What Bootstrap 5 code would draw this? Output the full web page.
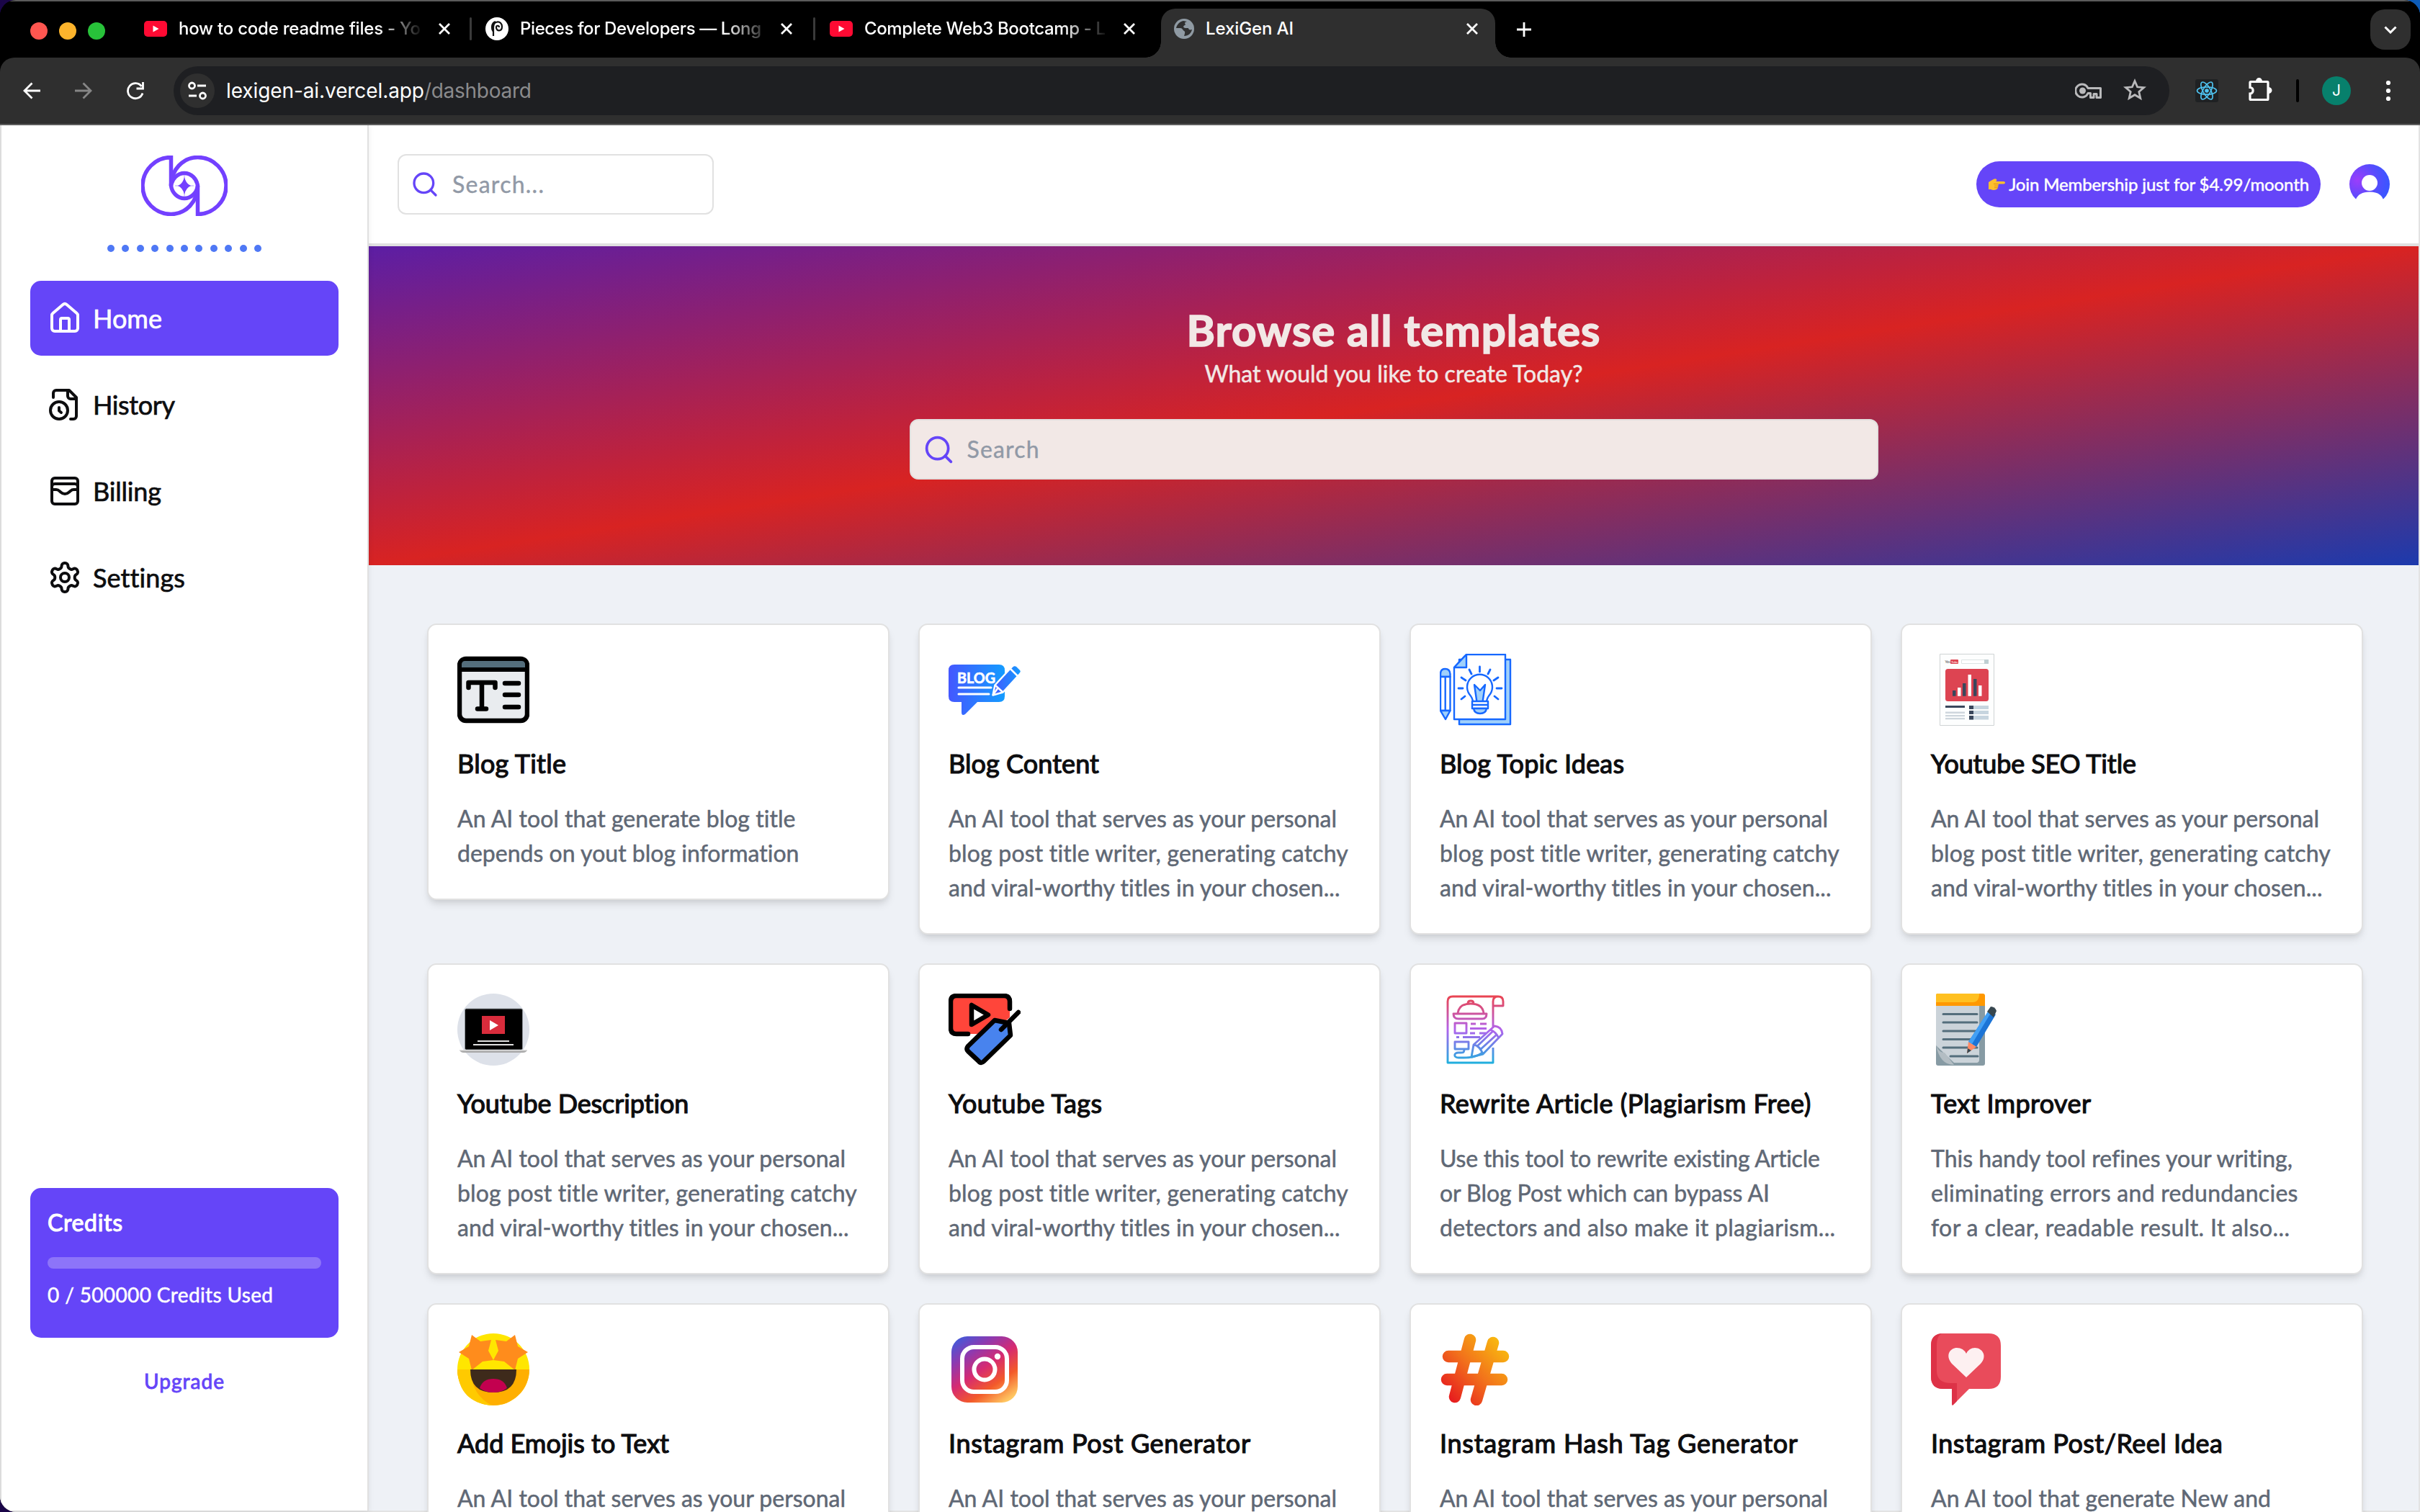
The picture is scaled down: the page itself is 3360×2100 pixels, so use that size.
<!DOCTYPE html>
<html lang="en">
<head>
<meta charset="utf-8">
<meta name="viewport" content="width=device-width, initial-scale=1">
<title>LexiGen AI</title>
<link href="https://cdn.jsdelivr.net/npm/bootstrap@5.3.0/dist/css/bootstrap.min.css" rel="stylesheet">
<style>
:root{--brand:#6545f8;--ui:Lato,"Open Sans",sans-serif;--chrome:Inter,Roboto,sans-serif}
html,body{height:2100px;overflow:hidden}
body{background:linear-gradient(90deg,#1a0548,#0d5cb8);font-family:var(--ui);color:#0d0d0f}
svg{display:block;flex:none}
.fit{display:inline-block;white-space:nowrap}
.win{width:3360px;height:2100px;border-radius:22px 22px 0 22px;overflow:hidden;background:#000}
/* browser chrome */
.tabstrip{height:80px;border-top:2px solid #5b5b5b;background:#000;color:#fff;font:500 24px/1 var(--chrome);padding:0 13px 0 42px}
.light{width:24px;height:24px;border-radius:50%;margin-right:16px;margin-top:3px}
.tab{height:78px;display:flex;flex:none;align-items:center;padding-bottom:2px}
.tab .ttl{margin-left:16px;flex:1;overflow:hidden;line-height:32px}
.fade-r{-webkit-mask-image:linear-gradient(90deg,#000 82%,transparent 101%)}
.tsep{width:3px;height:32px;background:#3a3a3a;border-radius:2px}
.tab.on{position:relative;background:#2f2f2f;height:68px;align-self:flex-end;border-radius:20px 20px 0 0;padding-bottom:12px}
.tab.on::before,.tab.on::after{content:"";position:absolute;bottom:0;width:22px;height:22px}
.tab.on::before{left:-22px;background:radial-gradient(circle at 0 0,#0000 21.5px,#2f2f2f 22px)}
.tab.on::after{right:-22px;background:radial-gradient(circle at 100% 0,#0000 21.5px,#2f2f2f 22px)}
.dd{width:56px;height:56px;border-radius:20px;background:#2f2f2f}
.toolbar{height:94px;background:#2f2f2f;border-bottom:2px solid #5f5f5f;border-radius:20px 20px 0 0}
.omni{width:2771px;height:68px;border-radius:34px;background:#1e1f22;padding:0 32px 0 9px;font:400 28px/1 var(--chrome)}
.tune{width:48px;height:48px;border-radius:50%;background:#2f2f2f}
.me{width:40px;height:40px;border-radius:50%;background:#07806c;color:#fff;font:400 21px/40px var(--chrome);text-align:center}
/* page */
.page{height:1926px;border:2px solid #e3e3e3;border-top:0;background:#fff}
.side{width:510px;border-right:2px solid #e0e0e0;padding:42px 40px 0;box-shadow:0 2px 8px rgba(0,0,0,.08);z-index:2;position:relative}
.dots{gap:10.4px;margin:40px 0 40px}
.dots i{width:10px;height:10px;border-radius:50%;background:#4f78f5}
.navi{height:104px;border-radius:15px;padding:0 24px;font-size:36px;gap:15px;color:#0d0d0f;text-decoration:none;-webkit-text-stroke:.7px}
.navi.on{background:var(--brand);color:#fff}
.credits{height:208px;border-radius:15px;background:var(--brand);color:#fff;padding:24px}
.credits h2{font-size:32px;line-height:48px;margin:0 0 24px;font-weight:400;-webkit-text-stroke:1.1px}
.bar{height:16px;border-radius:8px;background:#8d74f9}
.credits p{font-size:28px;line-height:40px;margin:16px 0 0;-webkit-text-stroke:.5px}
.upg{color:var(--brand);font-size:28px;line-height:40px;margin:40px 0 160px;-webkit-text-stroke:.9px}
.topbar{height:168px;border-bottom:4px solid #e0e0e0;padding:0 40px 0 40px}
.find{border:2px solid #e1e1e1;border-radius:12px;height:84px;font-size:32px;color:#9199a6;-webkit-text-stroke:.4px}
.pill{height:64px;border-radius:32px;background:var(--brand);color:#fff;font-size:24px;padding:0 16px;gap:5px;-webkit-text-stroke:.5px}
.hero{height:443px;background:linear-gradient(to bottom right,#5c1ea4,#d82322,#1c3aad);padding-top:76px;color:#f2e8e6}
.hero h1{font-size:60px;line-height:80px;margin:0;font-weight:700;-webkit-text-stroke:1.6px}
.hero p{font-size:32px;line-height:48px;margin:-3px 0 39px;-webkit-text-stroke:.5px}
.hero .find{width:1345px;background:#f2e8e6;border-color:#e3dfde}
.main{background:#eef1f6}
.tools{display:grid;grid-template-columns:repeat(4,642px);gap:40px;padding:81px 0 0 81px;align-items:start}
.tool{border:2px solid #e1e1e1;border-radius:13px;background:#fff;padding:40px;box-shadow:0 8px 12px -2px rgba(0,0,0,.1),0 4px 8px -4px rgba(0,0,0,.1)}
.tool h3{font-size:36px;line-height:56px;margin:24px 0 25px;font-weight:400;white-space:nowrap;-webkit-text-stroke:1.2px}
.tool p{font-size:32px;line-height:48px;margin:0 0 -1px;color:#5f6875;-webkit-text-stroke:.5px}
.tool p .fit{display:block;width:max-content}
</style>
</head>
<body>
<svg width="0" height="0" class="position-absolute">
<defs>
<symbol id="yt" viewBox="0 0 32 22"><rect width="32" height="22" rx="5" fill="#ff0a33"/><path d="M12.500 6.500v9l8-4.500z" fill="#fff"/></symbol>
<symbol id="x" viewBox="0 0 16 16"><path d="M1 1l14 14M15 1L1 15" stroke="#fff" stroke-width="2.800"/></symbol>
<symbol id="mag" viewBox="0 0 24 24"><g fill="none" stroke="#6545f8" stroke-width="2" stroke-linecap="round"><circle cx="11" cy="11" r="8"/><path d="m21 21-4.300-4.300"/></g></symbol>
</defs>
</svg>
<div class="win">
  <header>
    <div class="tabstrip d-flex align-items-center">
      <span class="light" style="background:#ff5650"></span><span class="light" style="background:#fdb42c"></span><span class="light" style="background:#28c23a"></span>
      <div class="tab" style="width:493px;padding-left:38px"><svg width="32" height="22"><use href="#yt"/></svg><div class="ttl fade-r"><span class="fit" data-w="335">how to code readme files - Yo</span></div><svg class="ms-4" width="16" height="16"><use href="#x"/></svg><span class="tsep" style="margin-left:27px"></span></div>
      <div class="tab" style="width:477px;padding-left:19px"><svg width="32" height="32" viewBox="0 0 32 32"><circle cx="16" cy="16" r="16" fill="#fff"/><path d="M11 26V14c0-10 12-10 12-1 0 7-8 7-8 1 0-3 4-3 4 0M11 20c-3-4-3-12 3-14" fill="none" stroke="#111" stroke-width="2.200"/></svg><div class="ttl fade-r"><span class="fit" data-w="334">Pieces for Developers — Long</span></div><svg class="ms-3" width="16" height="16"><use href="#x"/></svg><span class="tsep" style="margin-left:29px"></span></div>
      <div class="tab" style="width:480px;padding-left:20px"><svg width="32" height="22"><use href="#yt"/></svg><div class="ttl fade-r"><span class="fit" data-w="334">Complete Web3 Bootcamp - L</span></div><svg class="ms-4" width="16" height="16" style="margin-right:36px"><use href="#x"/></svg></div>
      <div class="tab on" style="width:464px;padding-left:18px;padding-right:24px"><svg width="28" height="28" viewBox="0 0 28 28"><circle cx="14" cy="14" r="14" fill="#8f9aa3"/><path d="M13 3c-5 1-9 5-10 10h6c3 0 3 3 5 4 2 1 1 4 0 7 6 0 10-4 11-9-3 1-5 0-5-2h-4c-3 0-4-3-1-4 2-1 0-2 0-3s2-2 3-2z" fill="#2f2f2f"/></svg><div class="ttl"><span class="fit" data-w="121">LexiGen AI</span></div><svg width="16" height="16"><use href="#x"/></svg></div>
      <svg width="20" height="20" viewBox="0 0 20 20" style="margin-left:30px"><path d="M10 0v20M0 10h20" stroke="#fff" stroke-width="2.800"/></svg>
      <div class="dd ms-auto d-flex align-items-center justify-content-center"><svg width="18" height="11" viewBox="0 0 18 11"><path d="M1.500 1.500L9 9l7.500-7.500" fill="none" stroke="#fff" stroke-width="3"/></svg></div>
    </div>
    <div class="toolbar d-flex align-items-center">
      <svg width="24" height="24" viewBox="0 0 24 24" style="margin-left:32px"><path d="M24 12H2M12.500 1.500L2 12l10.500 10.500" fill="none" stroke="#fff" stroke-width="2.800"/></svg>
      <svg width="24" height="24" viewBox="0 0 24 24" style="margin-left:48px"><path d="M0 12h22M11.500 1.500L22 12 11.500 22.500" fill="none" stroke="#868686" stroke-width="2.800"/></svg>
      <svg width="26" height="26" viewBox="0 0 26 26" style="margin-left:47px"><path d="M23 16.500A10.500 10.500 0 1 1 21.500 7M23.500 1v9h-9" fill="none" stroke="#fff" stroke-width="2.800"/></svg>
      <div class="omni d-flex align-items-center" style="margin-left:40px">
        <div class="tune d-flex align-items-center justify-content-center"><svg width="26" height="26" viewBox="0 0 26 26" fill="none" stroke="#fff" stroke-width="2.800"><circle cx="5.500" cy="6" r="4"/><path d="M13 6h12M1 20h11"/><circle cx="20.500" cy="20" r="4"/></svg></div>
        <div style="margin-left:16px"><span class="fit text-white" data-w="274">lexigen-ai.vercel.app</span><span class="fit" data-w="148" style="color:#8b8b8d">/dashboard</span></div>
        <svg class="ms-auto" width="38" height="24" viewBox="0 0 38 24" fill="none" stroke="#b9b9bb" stroke-width="3"><path d="M18 8.500h17.500v13h-5.500v-5h-4v5h-4.500v-6H18A9 9 0 1 1 18 8.500z" stroke-linejoin="round"/><circle cx="10.500" cy="12" r="4.500" fill="#b9b9bb" stroke="none"/></svg>
        <svg width="32" height="31" viewBox="0 0 32 31" style="margin:0 0 4px 29px"><path d="M16 3.500l3.600 8.300 9 .8-6.800 5.900 2 8.800L16 22.700l-7.800 4.600 2-8.800-6.800-5.900 9-.8z" fill="none" stroke="#b9b9bb" stroke-width="2.800"/></svg>
      </div>
      <svg width="32" height="32" viewBox="0 0 32 32" style="margin-left:36px"><rect width="32" height="32" rx="3" fill="#1f2123"/><g fill="none" stroke="#4fc3f0" stroke-width="1.700"><ellipse cx="16" cy="16" rx="13.500" ry="5.200"/><ellipse cx="16" cy="16" rx="13.500" ry="5.200" transform="rotate(60 16 16)"/><ellipse cx="16" cy="16" rx="13.500" ry="5.200" transform="rotate(120 16 16)"/></g><circle cx="16" cy="16" r="2.800" fill="#4fc3f0"/></svg>
      <svg width="34" height="34" viewBox="0 0 34 34" style="margin:0 0 4px 41px"><path d="M3 7.500q0-1 1-1h23q1 0 1 1v23q0 1-1 1H4q-1 0-1-1v-7.500c5.500 0 5.500-8.500 0-8.500z" fill="none" stroke="#fff" stroke-width="3.200"/><path d="M11 6a4.500 5 0 0 1 9 0zM28.500 14a5 4.500 0 0 1 0 9z" fill="#fff"/></svg>
      <span style="width:4px;height:32px;background:#000;margin-left:33px;border-radius:2px"></span>
      <div class="me" style="margin-left:32px">J</div>
      <svg width="8" height="30" viewBox="0 0 8 30" style="margin-left:48px" fill="#fff"><circle cx="4" cy="4" r="3.100"/><circle cx="4" cy="15" r="3.100"/><circle cx="4" cy="26" r="3.100"/></svg>
    </div>
  </header>
  <div class="page d-flex">
    <aside class="side d-flex flex-column flex-shrink-0">
      <svg class="mx-auto" width="120" height="84" viewBox="0 0 120 84" fill="none" stroke="#7340ff" stroke-width="5.500"><g id="lobe"><path d="M41.500 42V2.500A39.500 39.500 0 0 0 41.500 81.500C62 81.500 78.500 64 78.500 42A18.700 20.500 0 0 0 41.500 42"/></g><use href="#lobe" transform="rotate(180 60 42)"/><path d="M60 27v30M47 42h26" stroke="#b79cff" stroke-width="1"/><path d="M60 30q2.500 9.500 9 12-6.500 2.500-9 12-2.500-9.500-9-12 6.500-2.500 9-12z" fill="#7340ff" stroke="none"/></svg>
      <div class="dots d-flex justify-content-center"><i></i><i></i><i></i><i></i><i></i><i></i><i></i><i></i><i></i><i></i><i></i></div>
      <nav class="d-flex flex-column gap-3">
        <a class="navi on d-flex align-items-center"><svg width="48" height="48" viewBox="0 0 24 24" fill="none" stroke="currentColor" stroke-width="2" stroke-linecap="round" stroke-linejoin="round"><path d="M15 21v-8a1 1 0 0 0-1-1h-4a1 1 0 0 0-1 1v8"/><path d="M3 10a2 2 0 0 1 .709-1.528l7-5.999a2 2 0 0 1 2.582 0l7 5.999A2 2 0 0 1 21 10v9a2 2 0 0 1-2 2H5a2 2 0 0 1-2-2z"/></svg><span class="fit" data-w="95">Home</span></a>
        <a class="navi d-flex align-items-center"><svg width="48" height="48" viewBox="0 0 24 24" fill="none" stroke="currentColor" stroke-width="2" stroke-linecap="round" stroke-linejoin="round"><path d="M16 22h2a2 2 0 0 0 2-2V7l-5-5H6a2 2 0 0 0-2 2v3"/><path d="M14 2v4a2 2 0 0 0 2 2h4"/><circle cx="8" cy="16" r="6"/><path d="M9.500 17.500 8 16.250V14"/></svg><span class="fit" data-w="113">History</span></a>
        <a class="navi d-flex align-items-center"><svg width="48" height="48" viewBox="0 0 24 24" fill="none" stroke="currentColor" stroke-width="2" stroke-linecap="round" stroke-linejoin="round"><rect width="18" height="18" x="3" y="3" rx="2"/><path d="M3 9a2 2 0 0 1 2-2h14a2 2 0 0 1 2 2"/><path d="M3 11h3c.8 0 1.600.3 2.100.9l1.100.9c1.600 1.600 4.100 1.600 5.700 0l1.100-.9c.5-.5 1.300-.9 2.100-.9H21"/></svg><span class="fit" data-w="94">Billing</span></a>
        <a class="navi d-flex align-items-center"><svg width="48" height="48" viewBox="0 0 24 24" fill="none" stroke="currentColor" stroke-width="2" stroke-linecap="round" stroke-linejoin="round"><path d="M12.220 2h-.44a2 2 0 0 0-2 2v.18a2 2 0 0 1-1 1.730l-.43.25a2 2 0 0 1-2 0l-.15-.08a2 2 0 0 0-2.730.73l-.22.38a2 2 0 0 0 .73 2.730l.15.1a2 2 0 0 1 1 1.720v.51a2 2 0 0 1-1 1.740l-.15.09a2 2 0 0 0-.73 2.730l.22.38a2 2 0 0 0 2.730.73l.15-.08a2 2 0 0 1 2 0l.43.25a2 2 0 0 1 1 1.730V20a2 2 0 0 0 2 2h.44a2 2 0 0 0 2-2v-.18a2 2 0 0 1 1-1.730l.43-.25a2 2 0 0 1 2 0l.15.08a2 2 0 0 0 2.730-.73l.22-.39a2 2 0 0 0-.73-2.730l-.15-.08a2 2 0 0 1-1-1.740v-.5a2 2 0 0 1 1-1.740l.15-.09a2 2 0 0 0 .73-2.730l-.22-.38a2 2 0 0 0-2.730-.73l-.15.08a2 2 0 0 1-2 0l-.43-.25a2 2 0 0 1-1-1.730V4a2 2 0 0 0-2-2z"/><circle cx="12" cy="12" r="3"/></svg><span class="fit" data-w="126">Settings</span></a>
      </nav>
      <div class="mt-auto">
        <div class="credits">
          <h2><span class="fit" data-w="103">Credits</span></h2>
          <div class="bar"></div>
          <p><span class="fit" data-w="312">0 / 500000 Credits Used</span></p>
        </div>
        <div class="upg text-center"><span class="fit" data-w="110">Upgrade</span></div>
      </div>
    </aside>
    <main class="main flex-grow-1">
      <div class="topbar bg-white d-flex align-items-center justify-content-between">
        <div class="find d-flex align-items-center" style="width:439px;padding-left:16px;gap:18px"><svg width="40" height="40"><use href="#mag"/></svg><span class="fit" data-w="126">Search...</span></div>
        <div class="d-flex align-items-center" style="gap:40px">
          <div class="pill d-flex align-items-center"><svg width="24" height="17" viewBox="0 0 24 17"><path d="M1 5L6 2q4-3 6-1 1 2-1 3h11q2 0 2 1.700T22 7.500h-8q1.500 1 0 2.500 1 1.500-.5 2.500.5 2-1.500 2.500-4 2-8 0H1z" fill="#fcbf2d"/><path d="M8 7.500h6M9 10.200h5M9 12.700h4.500" stroke="#e08a12" stroke-width=".9"/></svg><span class="fit" data-w="416">Join Membership just for $4.99/moonth</span></div>
          <svg width="56" height="56" viewBox="0 0 56 56"><defs><radialGradient id="av" cx=".2" cy=".4" r=".75"><stop offset="0" stop-color="#9b3dfb"/><stop offset=".6" stop-color="#5a4bfd"/><stop offset="1" stop-color="#3d55ff"/></radialGradient></defs><circle cx="28" cy="28" r="28" fill="url(#av)"/><circle cx="28" cy="26" r="11" fill="#fff"/><path d="M9 49Q13 38.500 28 38.500T47 49L52 56H4z" fill="#fff"/></svg>
        </div>
      </div>
      <section class="hero d-flex flex-column align-items-center">
        <h1><span class="fit" data-w="573">Browse all templates</span></h1>
        <p><span class="fit" data-w="524">What would you like to create Today?</span></p>
        <div class="find d-flex align-items-center" style="padding-left:16px;gap:17px"><svg width="45" height="45"><use href="#mag"/></svg><span class="fit" data-w="99">Search</span></div>
      </section>
      <section class="tools">
        <article class="tool">
          <svg width="100" height="100" viewBox="0 0 100 100"><rect x="3" y="7" width="94" height="86" rx="9" fill="#e9ecef" stroke="#000" stroke-width="6.500"/><path d="M6 19v-4q0-5 5-5h78q5 0 5 5v4z" fill="#546e7c"/><path d="M4 22h92" stroke="#000" stroke-width="6"/><path d="M15.500 47v-7h37v7M34 40v36M28 76.500h12" fill="none" stroke="#000" stroke-width="6.500" stroke-linecap="round" stroke-linejoin="round"/><path d="M66 41h19M66 57h19M66 74h19" stroke="#000" stroke-width="6.500" stroke-linecap="round"/></svg>
          <h3><span class="fit" data-w="150">Blog Title</span></h3>
          <p><span class="fit" data-w="469">An AI tool that generate blog title</span><span class="fit" data-w="474">depends on yout blog information</span></p>
        </article>
        <article class="tool">
          <svg width="100" height="100" viewBox="0 0 100 100"><defs><linearGradient id="bg"><stop stop-color="#4457ff"/><stop offset="1" stop-color="#149cff"/></linearGradient></defs><path d="M8 15h62q8 0 8 8v36q0 8-8 8H40L23 84q-5 3-5-3V67H8q-8 0-8-8V23q0-8 8-8z" fill="url(#bg)"/><text x="12" y="41" font-family="Lato" font-weight="700" font-size="20" fill="#fff" stroke="#fff" stroke-width=".6" textLength="53" lengthAdjust="spacingAndGlyphs">BLOG</text><path d="M14 47h45M14 56h42" stroke="#fff" stroke-width="3" stroke-linecap="round"/><g transform="translate(1.500 -.5)"><path d="M60 58l3-14 24-26q3-3 7 0l4 4q3 3 0 6L74 54z" fill="url(#bg)" stroke="#fff" stroke-width="2.500" stroke-linejoin="round"/><path d="M63 44l11 10M84 21l11 11M60 58l7-10" stroke="#fff" stroke-width="2.500"/></g></svg>
          <h3><span class="fit" data-w="208">Blog Content</span></h3>
          <p><span class="fit" data-w="538">An AI tool that serves as your personal</span><span class="fit" data-w="555">blog post title writer, generating catchy</span><span class="fit" data-w="543">and viral-worthy titles in your chosen...</span></p>
        </article>
        <article class="tool">
          <svg width="100" height="100" viewBox="0 0 100 100" fill="#9fd0fb" stroke="#1668ff" stroke-width="2.400" stroke-linejoin="round"><path d="M27 8h71v90H27z"/><path d="M37 1h54v90H20V19z" fill="#fff"/><path d="M37 1v18H20z"/><path d="M1 28q0-7 6.500-7t7 7v4H1z"/><path d="M1 32h13.500v47H1zM7.700 32v47" fill="#fff"/><path d="M1 79l7 12 6.500-12z"/><path d="M46 67q0-5-5-11a17.500 17.500 0 1 1 29 0q-5 6-5 11z" fill="#fff"/><path d="M48 43l3.500 24h8L63 43l-7 8z"/><path d="M45 66h22v10H45zM45 71h22" fill="#fff"/><path d="M47 76h18q-1 7-9 7t-9-7z"/><path d="M55.500 18v7M41 22l3 6M70 22l-3 6M30 33l6 4M81 33l-6 4M26 48h6M79 48h7M30 63l5-4M81 63l-5-4" stroke-width="2.800" stroke-linecap="round"/></svg>
          <h3><span class="fit" data-w="255">Blog Topic Ideas</span></h3>
          <p><span class="fit" data-w="538">An AI tool that serves as your personal</span><span class="fit" data-w="555">blog post title writer, generating catchy</span><span class="fit" data-w="543">and viral-worthy titles in your chosen...</span></p>
        </article>
        <article class="tool">
          <svg width="100" height="100" viewBox="0 0 100 100"><path d="M12.500.5h75v99h-75z" fill="#fdfefe" stroke="#cfd3d4"/><text x="19.500" y="13" font-family="Lato" font-size="5" fill="#444">You</text><rect x="27" y="8" width="11" height="6" rx="1" fill="#dd4452"/><text x="28" y="13" font-family="Lato" font-size="4.500" fill="#fff">Tube</text><path d="M42.500 8.500h37v5h-37z" fill="#fff" stroke="#dde3e3"/><path d="M74 8h6v6h-6z" fill="#bfcfd2"/><rect x="20" y="21" width="60" height="45" rx="3.500" fill="#dd4452"/><path d="M30 51h4.500v7.700H30zM44 41h4.500v17.700H44zM59 35h4.500v23.700H59z" fill="#39475c"/><path d="M37 47h4.500v11.700H37zM51.500 29H56v29.700h-4.500zM66 44h4.500v14.700H66z" fill="#fff"/><path d="M20 72h27v3H20z" fill="#39475c"/><path d="M20 80.500h27v2.500H20zM20 85h27v2.200H20zM20 89h27v2.200H20z" fill="#ced6dd"/><path d="M53 72h27v5H53zM53 79h27v5H53zM53 86h27v5.500H53z" fill="#c7d5df"/><path d="M53 72h6v5h-6zM53 79h6v5h-6zM53 86h6v5.500h-6z" fill="#39475c"/></svg>
          <h3><span class="fit" data-w="284">Youtube SEO Title</span></h3>
          <p><span class="fit" data-w="538">An AI tool that serves as your personal</span><span class="fit" data-w="555">blog post title writer, generating catchy</span><span class="fit" data-w="543">and viral-worthy titles in your chosen...</span></p>
        </article>
        <article class="tool">
          <svg width="100" height="100" viewBox="0 0 100 100"><circle cx="50" cy="50" r="50" fill="#dde1e9"/><rect x="10.500" y="21" width="80" height="57" rx="2" fill="#000" stroke="#8d9297"/><path d="M34 31h32v25H34z" fill="#d92c3c"/><path d="M45 37v14l12-7z" fill="#fff"/><path d="M28 66h44M22 71h56" stroke="#e0e0e0" stroke-width="1.800"/><path d="M3 78h94q-1 4-6 4H9q-5 0-6-4z" fill="#a9a9a9"/><path d="M3 78h94v1.500H3z" fill="#ddd"/></svg>
          <h3><span class="fit" data-w="321">Youtube Description</span></h3>
          <p><span class="fit" data-w="538">An AI tool that serves as your personal</span><span class="fit" data-w="555">blog post title writer, generating catchy</span><span class="fit" data-w="543">and viral-worthy titles in your chosen...</span></p>
        </article>
        <article class="tool">
          <svg width="100" height="100" viewBox="0 0 100 100" stroke-linecap="round" stroke-linejoin="round" stroke="#000" stroke-width="6.500"><path d="M11 3h66q8 0 8 8v22L58 56H11q-8 0-8-8V11q0-8 8-8z" fill="#ff453a" stroke="none"/><path d="M85 21V11q0-8-8-8H11q-8 0-8 8v37q0 8 8 8h16" fill="none"/><path d="M32 16v27l23-13.500z" fill="#fff"/><path d="M64 37l20 4 2 17-37 36q-4 4-7 0L27 80q-3-3 0-7z" fill="#4883ee"/><path d="M73 50l24-24" fill="none"/></svg>
          <h3><span class="fit" data-w="212">Youtube Tags</span></h3>
          <p><span class="fit" data-w="538">An AI tool that serves as your personal</span><span class="fit" data-w="555">blog post title writer, generating catchy</span><span class="fit" data-w="543">and viral-worthy titles in your chosen...</span></p>
        </article>
        <article class="tool">
          <svg width="100" height="100" viewBox="0 0 100 100" fill="none" stroke="url(#rw)" stroke-width="2.900" stroke-linejoin="round"><defs><linearGradient id="rw" gradientUnits="userSpaceOnUse" x1="0" y1="3" x2="0" y2="97"><stop stop-color="#ea4450"/><stop offset=".25" stop-color="#cf549a"/><stop offset=".5" stop-color="#b163ec"/><stop offset=".7" stop-color="#747fe8"/><stop offset="1" stop-color="#1fb0dd"/></linearGradient></defs><path d="M74 46V11q0-7 7-7t7 7v6H74M81 4H18q-7 0-7 7v85h63V75"/><path d="M25 27q2-13 18-13t18 13M19 28h46q0 7-6 7H26q-7 0-7-7zM39 14q0-4 4-4t4 4"/><path d="M21 41h16v14H21zM43 42h7M56 42h9M42 48.500h23M42 55h7M55 55h9M23 60.500h4M32 60.500h24M21 67h19v10H21zM34 77c0 6-2 5-8 5-7 0-7 7 0 7 12 0 24 1 34-8"/><path d="M44 88l3-17 29-26q10 1 11 11L60 84zM47 71q8 1 13 13M70 50q8 3 12 12M52 73l22-21M56 78l23-21"/></svg>
          <h3><span class="fit" data-w="515">Rewrite Article (Plagiarism Free)</span></h3>
          <p><span class="fit" data-w="528">Use this tool to rewrite existing Article</span><span class="fit" data-w="457">or Blog Post which can bypass AI</span><span class="fit" data-w="548">detectors and also make it plagiarism...</span></p>
        </article>
        <article class="tool">
          <svg width="100" height="100" viewBox="0 0 100 100"><path d="M7 10h68v87q0 3-3 3H10q-3 0-3-3z" fill="#879ba4"/><path d="M7 14h60v78q0 3-3 4H32L7 72z" fill="#cbd3d9"/><path d="M7 71q4 12 12 11l13 17Q12 99 7 71z" fill="#b3bdc3"/><path d="M9 0h63q3 0 3 3v14H7V3q0-3 2-3z" fill="#ff9800"/><path d="M9 0h58q0 12-9 12H7V3q0-3 2-3z" fill="#ffc021"/><path d="M17 28.500h47M17 40h47M17 52h47M17 63.500h47M17 75h47M27 87h38" stroke="#546e7c" stroke-width="3" stroke-linecap="round"/><path d="M52 67l28-43 10 5-27 45z" fill="#1c74d6"/><path d="M52 67l27-42 4 2-26 43z" fill="#42a0f5"/><path d="M52 67l11 7-13 9z" fill="#ff8a65"/><path d="M50 83l1-7 5 3z" fill="#37474f"/><path d="M78 25l5-7q6 0 8 6l-4 9z" fill="#37474f"/></svg>
          <h3><span class="fit" data-w="221">Text Improver</span></h3>
          <p><span class="fit" data-w="501">This handy tool refines your writing,</span><span class="fit" data-w="509">eliminating errors and redundancies</span><span class="fit" data-w="497">for a clear, readable result. It also...</span></p>
        </article>
        <article class="tool">
          <svg width="100" height="100" viewBox="0 0 100 100"><circle cx="50" cy="50" r="50" fill="#ffe600"/><path d="M0 50h100A50 50 0 0 1 50 100 50 50 0 0 1 0 50z" fill="#ffaf00"/><path d="M0 50h18q2 36 30 50Q2 96 0 50z" fill="#ffca00"/><g fill="#ff8c1c"><path d="M20 2l12 9 15-2-4 15 7 13-15 2-15 12-4-16L2 26l14-8z"/><path d="M80 2L68 11 53 9l4 15-7 13 15 2 15 12 4-16 14-9-14-8z"/></g><path d="M18 50h64q0 32-32 32T18 50z" fill="#3e2a1b"/><path d="M31 76q4-13 19-13t19 13q-8 6-19 6t-19-6z" fill="#c3004f"/></svg>
          <h3><span class="fit" data-w="293">Add Emojis to Text</span></h3>
          <p><span class="fit" data-w="538">An AI tool that serves as your personal</span><span class="fit" data-w="555">blog post title writer, generating catchy</span></p>
        </article>
        <article class="tool">
          <svg width="100" height="100" viewBox="0 0 100 100"><defs><linearGradient id="ig" x1=".1" y1="0" x2=".8" y2="1"><stop stop-color="#3e5bdc"/><stop offset=".25" stop-color="#8d3ab0"/><stop offset=".5" stop-color="#d62a72"/><stop offset=".75" stop-color="#f35a2a"/><stop offset="1" stop-color="#ffc862"/></linearGradient></defs><rect x="4" y="4" width="92" height="92" rx="22" fill="url(#ig)"/><rect x="19" y="19" width="62" height="62" rx="16" fill="none" stroke="#fff" stroke-width="6"/><circle cx="50" cy="50" r="14.500" fill="none" stroke="#fff" stroke-width="6"/><circle cx="68" cy="32" r="4.200" fill="#fff"/></svg>
          <h3><span class="fit" data-w="418">Instagram Post Generator</span></h3>
          <p><span class="fit" data-w="538">An AI tool that serves as your personal</span><span class="fit" data-w="555">blog post title writer, generating catchy</span></p>
        </article>
        <article class="tool">
          <svg width="100" height="100" viewBox="0 0 100 100"><defs><linearGradient id="hs" gradientUnits="userSpaceOnUse" x1="10" y1="90" x2="90" y2="15"><stop stop-color="#e6191f"/><stop offset=".5" stop-color="#f2721b"/><stop offset="1" stop-color="#f9bb0f"/></linearGradient></defs><path d="M42 9L21 88M74 13L51 92M12 32h76M10 64h76" stroke="url(#hs)" stroke-width="16.500" stroke-linecap="round"/></svg>
          <h3><span class="fit" data-w="496">Instagram Hash Tag Generator</span></h3>
          <p><span class="fit" data-w="538">An AI tool that serves as your personal</span><span class="fit" data-w="555">blog post title writer, generating catchy</span></p>
        </article>
        <article class="tool">
          <svg width="100" height="100" viewBox="0 0 100 100"><path d="M17 0h63q17 0 17 17v43q0 17-17 17H53L31 99q-2 2-2-2V77H17Q0 77 0 60V17Q0 0 17 0z" fill="#e94b5b"/><path d="M17 0Q8 1 8 17v35q0 17 20 17h8v25l-5 5q-2 2-2-2V77H17Q0 77 0 60V17Q0 0 17 0z" fill="#dd3247"/><path d="M49 61L29 42C19 30 27 20 36 20q9 0 13 8 4-8 12-8c10 0 18 11 8 22z" fill="#fdf0f1"/></svg>
          <h3><span class="fit" data-w="404">Instagram Post/Reel Idea</span></h3>
          <p><span class="fit" data-w="471">An AI tool that generate New and</span><span class="fit" data-w="520">trending instagram idea depends on</span></p>
        </article>
      </section>
    </main>
  </div>
</div>
<script src="https://cdn.jsdelivr.net/npm/bootstrap@5.3.0/dist/js/bootstrap.bundle.min.js"></script>
<script>
/* Track each label to its design width, in px. */
document.querySelectorAll('.fit[data-w]').forEach(el => {
  const natural = el.getBoundingClientRect().width;
  el.style.letterSpacing = ((+el.dataset.w + 1 - natural) / (el.textContent.length - 1)).toFixed(3) + 'px';
});
</script>
</body>
</html>
